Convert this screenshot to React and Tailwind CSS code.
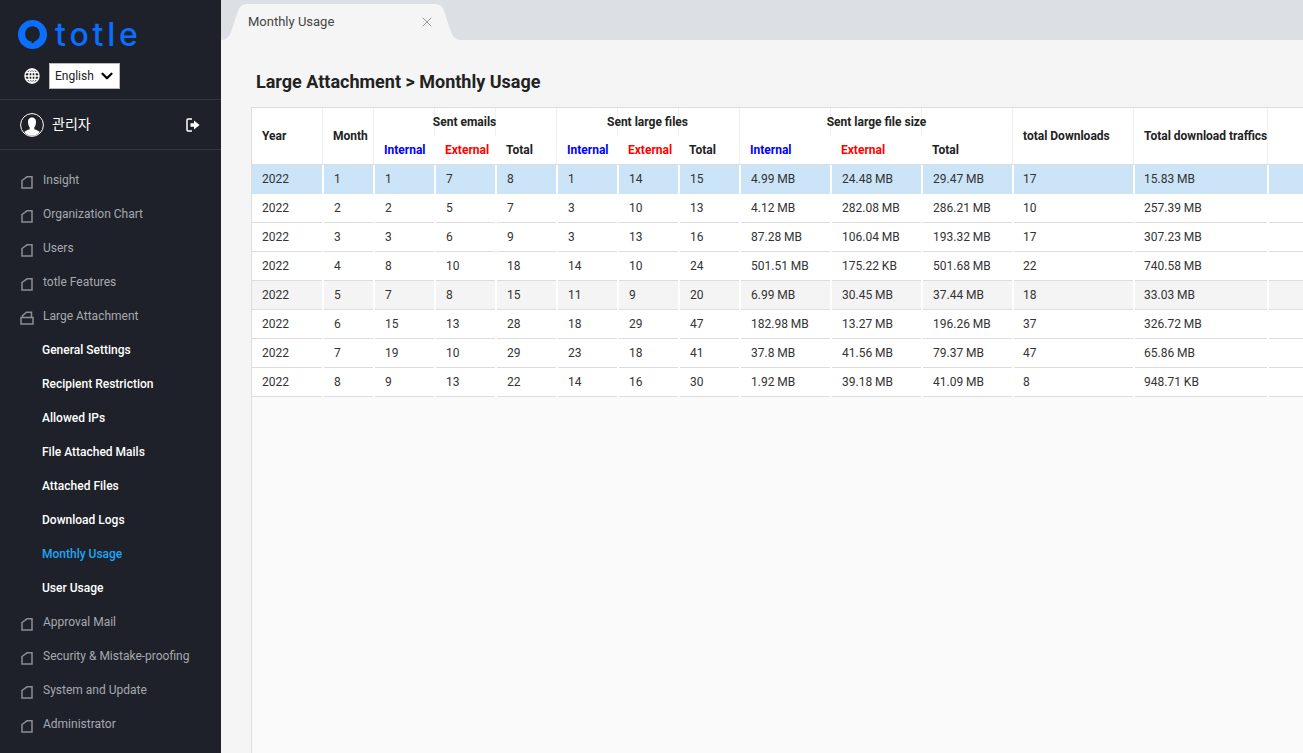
import React from 'react';
import { ChevronDown, X } from 'lucide-react';

const GRID = 'grid grid-cols-[72px_51px_61px_61px_61px_61px_61px_61px_91px_91px_91px_121px_134px_1fr]';

const rows = [
  ['2022', '1', '1', '7', '8', '1', '14', '15', '4.99 MB', '24.48 MB', '29.47 MB', '17', '15.83 MB'],
  ['2022', '2', '2', '5', '7', '3', '10', '13', '4.12 MB', '282.08 MB', '286.21 MB', '10', '257.39 MB'],
  ['2022', '3', '3', '6', '9', '3', '13', '16', '87.28 MB', '106.04 MB', '193.32 MB', '17', '307.23 MB'],
  ['2022', '4', '8', '10', '18', '14', '10', '24', '501.51 MB', '175.22 KB', '501.68 MB', '22', '740.58 MB'],
  ['2022', '5', '7', '8', '15', '11', '9', '20', '6.99 MB', '30.45 MB', '37.44 MB', '18', '33.03 MB'],
  ['2022', '6', '15', '13', '28', '18', '29', '47', '182.98 MB', '13.27 MB', '196.26 MB', '37', '326.72 MB'],
  ['2022', '7', '19', '10', '29', '23', '18', '41', '37.8 MB', '41.56 MB', '79.37 MB', '47', '65.86 MB'],
  ['2022', '8', '9', '13', '22', '14', '16', '30', '1.92 MB', '39.18 MB', '41.09 MB', '8', '948.71 KB'],
];

const topMenu = ['Insight', 'Organization Chart', 'Users', 'totle Features'];
const subMenu = ['General Settings', 'Recipient Restriction', 'Allowed IPs', 'File Attached Mails', 'Attached Files', 'Download Logs', 'Monthly Usage', 'User Usage'];
const bottomMenu = ['Approval Mail', 'Security & Mistake-proofing', 'System and Update', 'Administrator'];

const FolderIcon = () => (
  <svg width="14" height="14" viewBox="0 0 14 14" fill="none" stroke="#8b8e93" strokeWidth="1.5" className="shrink-0 mt-[3px]">
    <path d="M2 5.5 L7 1.8 H12 V13 H2 Z" />
  </svg>
);

const OpenFolderIcon = () => (
  <svg width="14" height="14" viewBox="0 0 14 14" fill="none" stroke="#8b8e93" strokeWidth="1.5" className="shrink-0 mt-[3px]">
    <path d="M2.5 6 V4.6 L6.5 1.2 H11.5 V6" />
    <path d="M1 6.5 H13 V13 H1 Z" />
  </svg>
);

const MenuItem = ({ label, open }) => (
  <div className="h-[34px] flex items-center pl-[20px] gap-[9px] text-[12px] text-[#a6a9af]">
    {open ? <OpenFolderIcon /> : <FolderIcon />}
    <span>{label}</span>
  </div>
);

const Logo = () => (
  <div className="flex items-center h-[29px] gap-[8px]">
    <svg width="29" height="29" viewBox="0 0 29 29" className="shrink-0">
      <circle cx="14.5" cy="14.5" r="14.5" fill="#0a6eff" />
      <path d="M14.5 6.2 C19 6.2 21.8 9.8 21.8 14 C21.8 18.2 19.2 20.6 16.6 21.4 C16 22.6 14.6 23.4 13.2 23.2 C13.8 22.6 14 22 14 21.6 C9.8 21.4 7.2 18.4 7.2 14 C7.2 9.8 10 6.2 14.5 6.2 Z" fill="#1e2129" />
    </svg>
    <span className="font-['Inter',sans-serif] font-medium text-[32px] leading-[29px] tracking-[3.8px] text-[#0a6eff]">totle</span>
  </div>
);

const GlobeIcon = () => (
  <svg width="16" height="16" viewBox="0 0 16 16" fill="none" stroke="#fff" strokeWidth="1.4" className="shrink-0">
    <circle cx="8" cy="8" r="7" />
    <ellipse cx="8" cy="8" rx="3.2" ry="7" />
    <path d="M8 1 V15 M1 8 H15 M2 4.5 H14 M2 11.5 H14" />
  </svg>
);

const AvatarIcon = () => (
  <svg width="24" height="24" viewBox="0 0 24 24" className="shrink-0">
    <circle cx="12" cy="12" r="11.4" fill="none" stroke="#fff" strokeWidth="1" />
    <path d="M12 4.5 C15 4.5 16.2 7 16 9.6 C15.8 12 15 13.8 14.2 14.8 L14.4 16.2 C16.5 17 18.6 17.7 19.8 19 C18 21.4 15.2 22.8 12 22.8 C8.8 22.8 6 21.4 4.2 19 C5.4 17.7 7.5 17 9.6 16.2 L9.8 14.8 C9 13.8 8.2 12 8 9.6 C7.8 7 9 4.5 12 4.5 Z" fill="#fff" />
  </svg>
);

const LogoutIcon = () => (
  <svg width="14" height="14" viewBox="0 0 14 14" className="shrink-0">
    <path d="M6 1 H2 A1 1 0 0 0 1 2 V12 A1 1 0 0 0 2 13 H6" fill="none" stroke="#fff" strokeWidth="1.5" />
    <path d="M4.5 5.2 H8 V2.6 L13.6 7 L8 11.4 V8.8 H4.5 Z" fill="#fff" />
  </svg>
);

const Sidebar = () => (
  <aside className="w-[221px] shrink-0 h-full bg-[#1e2129] font-['Roboto',sans-serif]">
    <div className="h-[100px] border-b border-[#33363d] pl-[18px] pt-[20px]">
      <Logo />
      <div className="flex items-center gap-[9px] mt-[14px] ml-[6px]">
        <GlobeIcon />
        <div className="w-[71px] h-[26px] bg-white border border-[#bbb] flex items-center justify-between pl-[5px] pr-[3px] text-[12px] text-[#222]">
          <span>English</span>
          <ChevronDown size={18} strokeWidth={3} className="text-black" />
        </div>
      </div>
    </div>
    <div className="h-[50px] border-b border-[#33363d] flex items-center pl-[20px] pr-[21px]">
      <AvatarIcon />
      <span className="ml-[8px] -mt-[2px] text-[14px] text-white font-['Noto_Sans_CJK_KR',sans-serif]">관리자</span>
      <div className="ml-auto"><LogoutIcon /></div>
    </div>
    <nav className="pt-[13px]">
      {topMenu.map((label) => <MenuItem key={label} label={label} />)}
      <MenuItem label="Large Attachment" open />
      {subMenu.map((label) => (
        <div key={label} className={`h-[34px] flex items-center pl-[42px] text-[12px] font-medium ${label === 'Monthly Usage' ? 'text-[#1ea5f5]' : 'text-white'}`}>
          {label}
        </div>
      ))}
      {bottomMenu.map((label) => <MenuItem key={label} label={label} />)}
    </nav>
  </aside>
);

const TabBar = () => (
  <div className="h-[40px] shrink-0 bg-[#dcdfe3] flex">
    <div className="relative w-[240px] h-full pl-[27px] pr-[26px] pt-[4px] flex items-center justify-between">
      <svg width="240" height="40" viewBox="0 0 240 40" className="absolute left-0 top-0">
        <path d="M0 40 Q7 40 10 32 L17 11 Q19 4 26 4 H214 Q221 4 223 11 L230 32 Q233 40 240 40 Z" fill="#f5f5f5" />
      </svg>
      <span className="relative text-[13px] text-[#444]">Monthly Usage</span>
      <X size={16} strokeWidth={1.5} className="relative text-[#999]" />
    </div>
  </div>
);

const Th = ({ className = '', children }) => (
  <div className={`flex items-center whitespace-nowrap mr-px border-r border-[#f0f0f0] ${className}`}>{children}</div>
);

const SubTh = ({ color, className = '', children }) => (
  <div className={`flex items-center pl-[9px] h-[28px] whitespace-nowrap ${color} ${className}`}>{children}</div>
);

const SubHeaders = () => (
  <>
    <SubTh color="text-[#0000ff]">Internal</SubTh>
    <SubTh color="text-[#ff0000]">External</SubTh>
    <SubTh color="text-[#222]" className="mr-px border-r border-[#f0f0f0]">Total</SubTh>
  </>
);

const TableHeader = () => (
  <div className={`${GRID} grid-rows-[28px_28px] h-[57px] bg-white border-b border-[#ddd] text-[12px] font-bold text-[#222]`}>
    <Th className="row-span-2 pl-[10px]">Year</Th>
    <Th className="row-span-2 pl-[9px]">Month</Th>
    <Th />
    <Th className="justify-center pr-[2px]">Sent emails</Th>
    <Th />
    <Th />
    <Th className="justify-center pr-[2px]">Sent large files</Th>
    <Th />
    <Th />
    <Th className="justify-center">Sent large file size</Th>
    <Th />
    <Th className="row-span-2 pl-[9px]">total Downloads</Th>
    <Th className="row-span-2 pl-[9px]">Total download traffics</Th>
    <div className="row-span-2" />
    <SubHeaders />
    <SubHeaders />
    <SubHeaders />
  </div>
);

const rowStyle = (index) => {
  if (index === 0) return 'bg-[#cce4f7] border-[#cce4f7]';
  if (index === 4) return 'bg-[#f4f4f4] border-[#ddd]';
  return 'bg-white border-[#ddd]';
};

const Table = () => (
  <div className="flex-1 min-h-0 bg-[#fafafa] border-l border-t border-[#ddd] text-[12px] text-[#333]">
    <TableHeader />
    {rows.map((row, index) => (
      <div key={row[1]} className={`${GRID} h-[29px] bg-white`}>
        {[...row, ''].map((cell, i) => (
          <div
            key={i}
            className={`flex items-center border-b ${i === 11 || i === 12 ? 'pl-[9px]' : 'pl-[10px]'} ${i < 13 ? 'mr-[2px]' : ''} ${rowStyle(index)}`}
          >
            {cell}
          </div>
        ))}
      </div>
    ))}
  </div>
);

const App = () => (
  <div className="flex w-full h-screen overflow-hidden bg-[#f5f5f5] font-['Roboto',sans-serif]">
    <Sidebar />
    <main className="flex-1 min-w-0 flex flex-col">
      <TabBar />
      <div className="flex-1 min-h-0 flex flex-col pl-[30px]">
        <h1 className="h-[67px] pt-[30px] pl-[5px] text-[18px] leading-[24px] font-bold text-[#222]">
          Large Attachment &gt; Monthly Usage
        </h1>
        <Table />
      </div>
    </main>
  </div>
);

export default App;
